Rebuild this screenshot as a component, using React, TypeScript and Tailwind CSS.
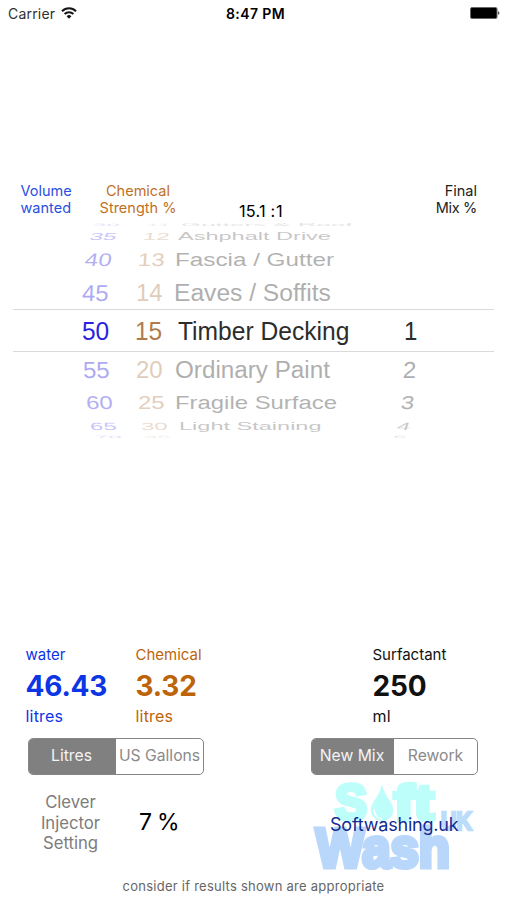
import type { CSSProperties, ReactNode } from "react";

type Cell = { text: string; x: number; skew?: number; sx?: number };
type Row = {
  height: number;
  scaleY: number;
  dy?: number;
  alpha: number;
  volume: Cell;
  strength: Cell;
  surface: Cell;
  mix?: Cell;
};

// Each row of the drum is flattened and sheared according to its angle.
const rows: Row[] = [
  { height: 6, scaleY: 0.14, alpha: 0.13, dy: 0, volume: { text: "30", x: 93, skew: -30 }, strength: { text: "11", x: 146, skew: -20 }, surface: { text: "Gutters & Roof", x: 181, sx: 1.08 } },
  { height: 15, scaleY: 0.42, alpha: 0.26, dy: 0.5, volume: { text: "35", x: 90, skew: -20 }, strength: { text: "12", x: 143, skew: -10 }, surface: { text: "Ashphalt Drive", x: 178, sx: 0.98 } },
  { height: 33, scaleY: 0.76, alpha: 0.36, volume: { text: "40", x: 85, skew: -9 }, strength: { text: "13", x: 138, skew: -4 }, surface: { text: "Fascia / Gutter", x: 175, sx: 1.01 } },
  { height: 33, scaleY: 0.96, alpha: 0.38, dy: 0.5, volume: { text: "45", x: 82, skew: -2 }, strength: { text: "14", x: 136 }, surface: { text: "Eaves / Soffits", x: 174, sx: 1.025 } },
  { height: 43, scaleY: 1.05, alpha: 1, dy: 1, volume: { text: "50", x: 82, sx: 1.02 }, strength: { text: "15", x: 135, sx: 1.02 }, surface: { text: "Timber Decking", x: 178, sx: 1.025 }, mix: { text: "1", x: 404 } },
  { height: 33, scaleY: 0.97, alpha: 0.38, dy: 1, volume: { text: "55", x: 83, skew: 2 }, strength: { text: "20", x: 136 }, surface: { text: "Ordinary Paint", x: 175, sx: 1.01 }, mix: { text: "2", x: 403, skew: -3 } },
  { height: 33, scaleY: 0.77, alpha: 0.36, dy: 1, volume: { text: "60", x: 86, skew: 4 }, strength: { text: "25", x: 138 }, surface: { text: "Fragile Surface", x: 175, sx: 0.995 }, mix: { text: "3", x: 401, skew: -9 } },
  { height: 15, scaleY: 0.44, alpha: 0.26, dy: 0, volume: { text: "65", x: 90, skew: 6 }, strength: { text: "30", x: 141, skew: 3 }, surface: { text: "Light Staining", x: 179, sx: 0.98 }, mix: { text: "4", x: 397, skew: -20 } },
  { height: 7, scaleY: 0.13, alpha: 0.14, volume: { text: "70", x: 95, skew: 15 }, strength: { text: "35", x: 144, skew: 10 }, surface: { text: "", x: 181 }, mix: { text: "5", x: 393, skew: -30 } },
];

function WheelCell({ cell, origin, row, color }: { cell?: Cell; origin: number; row: Row; color: string }) {
  const style: CSSProperties = cell
    ? {
        opacity: row.alpha,
        transform: `translate(${cell.x - origin}px, ${row.dy ?? 0}px) skewX(${cell.skew ?? 0}deg) scale(${cell.sx ?? 1}, ${row.scaleY})`,
      }
    : {};
  return (
    <span className={`origin-left whitespace-nowrap ${color}`} style={style}>
      {cell?.text}
    </span>
  );
}

function Wheel() {
  return (
    <div className="mt-[4px] flex h-[220px] flex-col font-['Liberation_Sans',Arial,sans-serif] text-[24px] leading-none">
      {rows.map((row) => (
        <div
          key={row.volume.text}
          style={{ height: row.height }}
          className={`mx-[13px] grid shrink-0 grid-cols-[69px_54px_41px_226px_1fr] grid-rows-[minmax(0,1fr)] items-center ${row.alpha === 1 ? "border-y border-[#dadada]" : ""}`}
        >
          <span />
          <WheelCell cell={row.volume} origin={82} row={row} color="text-[#2b22e0]" />
          <WheelCell cell={row.strength} origin={136} row={row} color="text-[#b07b4c]" />
          <WheelCell cell={row.surface} origin={177} row={row} color="text-[#2c2c2c]" />
          <WheelCell cell={row.mix} origin={403} row={row} color="text-[#2c2c2c]" />
        </div>
      ))}
    </div>
  );
}

function Segments({ className, left, right }: { className: string; left: ReactNode; right: ReactNode }) {
  return (
    <div className={`grid h-[37px] overflow-hidden rounded-[5px] border border-[#858585] text-[15.7px] ${className}`}>
      <button className="pr-[2px] pb-px bg-[#808080] text-[#f4f4f4]">{left}</button>
      <button className="pb-px whitespace-nowrap text-[#8a8a8a]">{right}</button>
    </div>
  );
}

function Result({ className, label, value, unit }: { className: string; label: string; value: string; unit: string }) {
  return (
    <div className={`flex flex-col ${className}`}>
      <span className="text-[15px] leading-[20px]">{label}</span>
      <span className="text-[28px] leading-[42px] font-bold tracking-[-0.2px]">{value}</span>
      <span className="text-[16px] leading-[19px] tracking-[0.2px]">{unit}</span>
    </div>
  );
}

function Logo() {
  return (
    <svg viewBox="0 0 162 92" className="col-start-1 row-start-1 h-[92px] w-[162px] overflow-visible font-['Liberation_Sans',Arial,sans-serif]" fontWeight="700" strokeLinejoin="miter">
      <g fill="#bdfdfa" stroke="#bdfdfa" strokeWidth="4.5">
        <text x="23" y="41" fontSize="50" textLength="32" lengthAdjust="spacingAndGlyphs">S</text>
        <text x="82" y="41" fontSize="50" textLength="40" lengthAdjust="spacingAndGlyphs">ft</text>
        <path d="M70 6C68 17 59 23 59 31a11 11 0 0 0 22 0C81 23 72 17 70 6Z" strokeWidth="0.5" />
        <path d="M62 30c0 6 3 9 8 10" fill="none" stroke="white" strokeWidth="1.5" />
      </g>
      <text x="129" y="51" fontSize="25" textLength="31" lengthAdjust="spacingAndGlyphs" fill="#bddcfc" stroke="#bddcfc" strokeWidth="2.5">UK</text>
      <text x="4" y="87.5" fontSize="56" textLength="134" lengthAdjust="spacingAndGlyphs" fill="#b8d7fa" stroke="#b8d7fa" strokeWidth="5">Wash</text>
    </svg>
  );
}

export default function App() {
  return (
    <main className="flex h-[900px] w-[507px] flex-col overflow-hidden bg-white font-['Inter',sans-serif] text-black">
      <header className="grid h-7 grid-cols-[1fr_auto_1fr] items-center pr-[7px] pb-[2px] pl-[8px] text-[14px]">
        <span className="flex items-center gap-[6px] tracking-[0.2px] text-[#303030]">
          Carrier
          <svg viewBox="0 0 16 12" className="h-3 w-4" fill="none" stroke="#151515" strokeWidth="2">
            <path d="M1 4.2a10 10 0 0 1 14 0M3.6 7a6.3 6.3 0 0 1 8.8 0" />
            <path d="M8 11.7 5.6 9.2a3.5 3.5 0 0 1 4.8 0Z" fill="#151515" stroke="none" />
          </svg>
        </span>
        <span className="ml-[3px] font-semibold tracking-[0.4px]">8:47 PM</span>
        <svg viewBox="0 0 31 12" className="h-3 w-[31px] justify-self-end">
          <rect x="1.5" y=".5" width="26.5" height="11" rx="1.5" stroke="#666" />
          <path d="M29.3 4q2 2 0 4Z" />
        </svg>
      </header>

      <section className="mt-[154px] flex h-9 text-[14.5px] leading-[17px]">
        <div className="ml-[20.5px] w-[56px] text-[#2850df]">Volume<br />wanted</div>
        <div className="ml-[19.5px] w-[84px] text-center whitespace-nowrap text-[#c0711f]">Chemical<br />Strength %</div>
        <div className="ml-[59px] self-end pb-px text-[16.3px] leading-[12px] tracking-[0.7px] whitespace-nowrap"><span className="tracking-[0.2px]">15.1 </span>:1</div>
        <div className="mr-[30px] ml-auto text-right text-[#222]">Final<br /><span className="tracking-[-0.3px]">Mix %</span></div>
      </section>

      <Wheel />

      <section className="mt-[203px] flex">
        <Result className="ml-[25.5px] w-[110px] text-[#0b35e5]" label="water" value="46.43" unit="litres" />
        <Result className="w-[237px] text-[#bd640b]" label="Chemical" value="3.32" unit="litres" />
        <Result className="text-[#111]" label="Surfactant" value="250" unit="ml" />
      </section>

      <section className="mt-[12px] flex justify-between pr-[29px] pl-[28px]">
        <Segments className="w-[176px] grid-cols-[87px_1fr]" left="Litres" right="US Gallons" />
        <Segments className="w-[167px] grid-cols-[82px_1fr]" left="New Mix" right="Rework" />
      </section>

      <section className="mt-[4px] flex h-[92px]">
        <div className="mt-[13px] ml-[28px] w-[85px] text-center text-[16.7px] leading-[20.5px] text-[#7c7c7c]">Clever<br />Injector<br />Setting</div>
        <div className="mt-[27px] ml-[26px] text-[23px] leading-[32px] tracking-[-0.7px]">7 %</div>
        <a className="mr-[33px] ml-auto grid">
          <Logo />
          <span className="z-10 col-start-1 row-start-1 mt-[34px] ml-[18px] text-[18px] leading-[24px] tracking-[-0.2px] text-[#132b92]">Softwashing.uk</span>
        </a>
      </section>

      <footer className="mt-[5px] text-center text-[13px] leading-[20px] tracking-[0.25px] text-[#666]">consider if results shown are appropriate</footer>
    </main>
  );
}
